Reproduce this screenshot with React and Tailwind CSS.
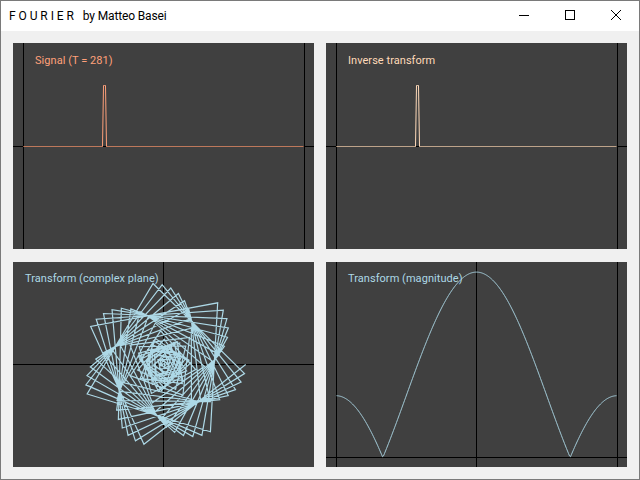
import React from "react";

const N = 281;
const pulse = [80, 81, 82];
const X = (k) => {
  let re = 0, im = 0;
  for (const n of pulse) {
    const a = (-2 * Math.PI * k * n) / N;
    re += Math.cos(a);
    im += Math.sin(a);
  }
  return [re, im];
};
const line = (pts) => pts.map((p) => `${p[0]},${p[1]}`).join(" ");

const signalPts = (x0) => {
  const pts = [];
  for (let n = 0; n < N; n++) pts.push([x0 + n, pulse.includes(n) ? 42.5 : 103.5]);
  return pts;
};
const magPts = () => {
  const pts = [];
  for (let i = 0; i < N; i++) {
    const [re, im] = X(i - 140);
    pts.push([10.5 + i, 195.5 - 61.8 * Math.hypot(re, im)]);
  }
  return pts;
};
const planePts = () => {
  const pts = [];
  for (let k = 0; k <= 140; k++) {
    const [re, im] = X(k);
    pts.push([150.5 + 27.4 * re, 102.5 - 27.4 * im]);
  }
  return pts;
};

function Axes({ h, vs, y }) {
  return (
    <g stroke="#000" strokeWidth="1" shapeRendering="crispEdges">
      <line x1="0" x2="301" y1={y} y2={y} />
      {vs.map((x) => (
        <line key={x} x1={x} x2={x} y1="0" y2={h} />
      ))}
    </g>
  );
}

function Panel({ title, color, left, top, h, children }) {
  return (
    <div className="relative w-[301px] bg-[#404040]" style={{ height: h }}>
      <svg width="301" height={h} className="block" fill="none">
        {children}
      </svg>
      <span className={`absolute text-[11px] leading-[18px] tracking-[0.05px] whitespace-nowrap ${top} ${left} ${color}`}>{title}</span>
    </div>
  );
}

export default function App() {
  return (
    <div className="w-[640px] h-[480px] flex flex-col border border-[#7a7a7a] bg-[#f0f0f0] font-['Roboto','Liberation_Sans',sans-serif]">
      <div className="h-[30px] flex items-center justify-between bg-white shrink-0">
        <div className="flex pl-[8px] text-[12px] text-black whitespace-pre">
          <span className="tracking-[2.9px] mr-[6px]">FOURIER</span>
          <span className="tracking-[-0.15px]">by Matteo Basei</span>
        </div>
        <div className="flex h-full">
          <div className="w-[46px] pb-[2px] flex items-center justify-center">
            <svg width="10" height="10" shapeRendering="crispEdges"><line x1="0" x2="10" y1="5.5" y2="5.5" stroke="#000" /></svg>
          </div>
          <div className="w-[46px] pb-[2px] flex items-center justify-center">
            <svg width="10" height="10" shapeRendering="crispEdges"><rect x="0.5" y="0.5" width="9" height="9" fill="none" stroke="#000" /></svg>
          </div>
          <div className="w-[46px] pb-[2px] flex items-center justify-center">
            <svg width="12" height="12"><path d="M1 1L11 11M11 1L1 11" stroke="#000" /></svg>
          </div>
        </div>
      </div>
      <div className="flex-1 flex flex-col gap-[13px] px-[12px] pt-[12px]">
        <div className="flex gap-[12px]">
          <Panel title="Signal (T = 281)" color="text-[#ffa07a]" left="left-[22px]" top="top-[9px]" h={206}>
            <Axes h={206} vs={[10.5, 291.5]} y={103.5} />
            <polyline points={line(signalPts(10.5))} stroke="#ffa07a" />
          </Panel>
          <Panel title="Inverse transform" color="text-[#ffdab9]" left="left-[22px]" top="top-[9px]" h={206}>
            <Axes h={206} vs={[10.5, 291.5]} y={103.5} />
            <polyline points={line(signalPts(10.5))} stroke="#ffdab9" />
          </Panel>
        </div>
        <div className="flex gap-[12px]">
          <Panel title="Transform (complex plane)" color="text-[#add8e6]" left="left-[12px]" top="top-[8px]" h={205}>
            <Axes h={205} vs={[150.5]} y={102.5} />
            <polyline points={line(planePts())} stroke="#add8e6" strokeWidth="1.2" />
          </Panel>
          <Panel title="Transform (magnitude)" color="text-[#add8e6]" left="left-[22px]" top="top-[8px]" h={205}>
            <Axes h={205} vs={[10.5, 150.5, 291.5]} y={195.5} />
            <polyline points={line(magPts())} stroke="#add8e6" strokeWidth="0.9" />
          </Panel>
        </div>
      </div>
    </div>
  );
}
